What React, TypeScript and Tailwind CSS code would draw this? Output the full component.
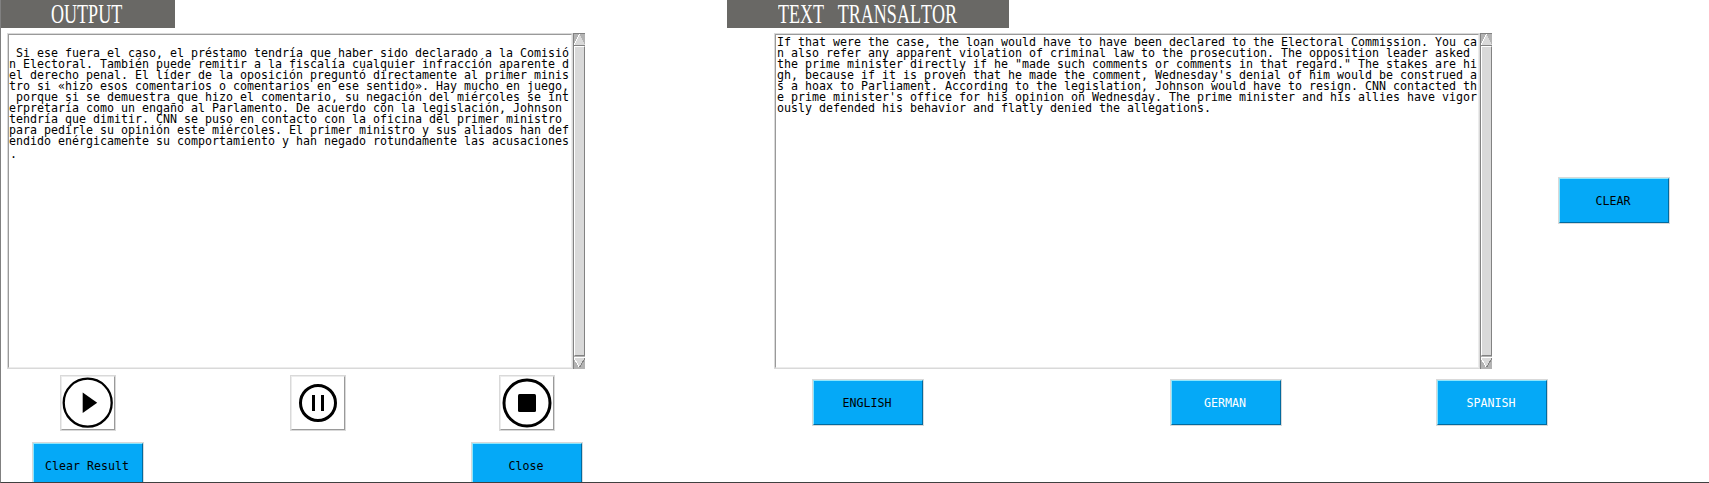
import React from 'react';

const MONO = "font-['DejaVu_Sans_Mono',monospace]";

const OUTPUT_LINES = [
  ' Si ese fuera el caso, el préstamo tendría que haber sido declarado a la Comisió',
  'n Electoral. También puede remitir a la fiscalía cualquier infracción aparente d',
  'el derecho penal. El líder de la oposición preguntó directamente al primer minis',
  'tro si «hizo esos comentarios o comentarios en ese sentido». Hay mucho en juego,',
  ' porque si se demuestra que hizo el comentario, su negación del miércoles se int',
  'erpretaría como un engaño al Parlamento. De acuerdo con la legislación, Johnson ',
  'tendría que dimitir. CNN se puso en contacto con la oficina del primer ministro ',
  'para pedirle su opinión este miércoles. El primer ministro y sus aliados han def',
  'endido enérgicamente su comportamiento y han negado rotundamente las acusaciones',
];

const SOURCE_LINES = [
  'If that were the case, the loan would have to have been declared to the Electoral Commission. You ca',
  'n also refer any apparent violation of criminal law to the prosecution. The opposition leader asked ',
  'the prime minister directly if he "made such comments or comments in that regard." The stakes are hi',
  'gh, because if it is proven that he made the comment, Wednesday\'s denial of him would be construed a',
  's a hoax to Parliament. According to the legislation, Johnson would have to resign. CNN contacted th',
  'e prime minister\'s office for his opinion on Wednesday. The prime minister and his allies have vigor',
  'ously defended his behavior and flatly denied the allegations.',
];

function Heading({ children, className }: { children: string; className: string }) {
  return (
    <h1 className={`h-7 bg-[#696865] text-white ${className}`}>
      <span className="block w-max origin-left scale-x-[0.645] whitespace-nowrap font-['Liberation_Serif',serif] text-[28px] leading-[28px] [font-kerning:none] [word-spacing:14px]">
        {children}
      </span>
    </h1>
  );
}

function Scrollbar() {
  return (
    <div className="flex h-[336px] w-3 flex-col border-l border-t border-[#828282] bg-[#b3b3b3]">
      <svg className="block h-3 w-[11px]" viewBox="0 0 11 12" shapeRendering="crispEdges">
        <path d="M5.5 0 L11 11 H0 Z" fill="#d9d9d9" />
        <path d="M0 11 L5.5 0" stroke="#fff" />
        <path d="M0 11.5 H11" stroke="#828282" />
      </svg>
      <div className="h-[310px] border-b border-l border-r border-t border-b-[#828282] border-l-white border-r-[#828282] border-t-white bg-[#d9d9d9]" />
      <svg className="block h-3 w-[11px]" viewBox="0 0 11 12" shapeRendering="crispEdges">
        <path d="M0 1.5 H11" stroke="#fff" />
        <path d="M0 2 H11 L5.5 11.5 Z" fill="#d9d9d9" />
        <path d="M0 2 L5.5 11.5" stroke="#fff" />
        <path d="M11 2 L5.5 11.5" stroke="#828282" />
      </svg>
    </div>
  );
}

function TextPane({ lines, className, innerClassName, children }: { lines: string[]; className: string; innerClassName: string; children?: React.ReactNode }) {
  return (
    <div className="flex">
      <div className={`h-[336px] border border-[#d9d9d9] ${className}`}>
        <div className={`h-full border border-b-[#ececec] border-l-[#9a9a9a] border-r-[#ececec] border-t-[#9a9a9a] ${innerClassName}`}>
          <div className={`whitespace-pre text-[11.63px] leading-[11px] text-black ${MONO}`}>
            {lines.map((line) => (
              <div key={line}>{line}</div>
            ))}
            {children}
          </div>
        </div>
      </div>
      <Scrollbar />
    </div>
  );
}

function PushButton({ label, className = '' }: { label: string; className?: string }) {
  return (
    <button className={`block h-[47px] w-28 shrink-0 border border-[#d9d9d9] ${className}`}>
      <span className={`flex h-full items-center justify-center whitespace-pre border border-b-[#026a9e] border-l-[#8ee6fc] border-r-[#026a9e] border-t-[#8ee6fc] bg-[#05a9f7] pr-[2px] pt-[2px] text-[11.63px] ${MONO}`}>
        {label}
      </span>
    </button>
  );
}

function IconButton({ label, className = '', children }: { label: string; className?: string; children: React.ReactNode }) {
  return (
    <button aria-label={label} className={`block h-14 w-14 shrink-0 border border-[#d9d9d9] ${className}`}>
      <span className="block h-full border border-b-[#9a9a9a] border-l-[#ececec] border-r-[#9a9a9a] border-t-[#ececec]">
        <svg viewBox="0 0 52 52" className="block h-[52px] w-[52px]">
          {children}
        </svg>
      </span>
    </button>
  );
}

export default function App() {
  return (
    <main className="flex h-[483px] w-[1709px] overflow-hidden border-b border-l border-b-[#404040] border-l-[#808080] bg-white">
      <section className="w-[726px] shrink-0">
        <Heading className="w-[174px] pl-[50px]">OUTPUT</Heading>
        <div className="ml-[6px] mt-[5px]">
          <TextPane lines={OUTPUT_LINES} className="w-[566px]" innerClassName="pt-[13px]">
            <div className="pl-px pt-[2px]">.</div>
          </TextPane>
        </div>
        <div className="ml-[59px] mt-[6px] flex">
          <IconButton label="Play">
            <circle cx="25.7" cy="25.7" r="24" fill="none" stroke="#000" strokeWidth="2.3" />
            <path d="M20.7 15.5 L35.2 25.7 L20.7 36 Z" />
          </IconButton>
          <IconButton label="Pause" className="ml-[174px]">
            <circle cx="26" cy="26" r="17.5" fill="none" stroke="#000" strokeWidth="3" />
            <path d="M20 18h3v16h-3z M29 18h3v16h-3z" />
          </IconButton>
          <IconButton label="Stop" className="ml-[153px]">
            <circle cx="26" cy="26" r="23" fill="none" stroke="#000" strokeWidth="3" />
            <rect x="17" y="17" width="18" height="18" rx="1.5" />
          </IconButton>
        </div>
        <div className="ml-[31px] mt-[11px] flex">
          <PushButton label="Clear Result" />
          <PushButton label="Close" className="ml-[327px]" />
        </div>
      </section>
      <section className="w-[831px] shrink-0">
        <Heading className="w-[282px] pl-[50.5px]">TEXT TRANSALTOR</Heading>
        <div className="ml-[47px] mt-[5px]">
          <TextPane lines={SOURCE_LINES} className="w-[706px]" innerClassName="pt-[2px] pl-px" />
        </div>
        <div className="ml-[85px] mt-[10px] flex">
          <PushButton label="ENGLISH" />
          <PushButton label="GERMAN" className="ml-[246px] text-white" />
          <PushButton label="SPANISH" className="ml-[154px] text-white" />
        </div>
      </section>
      <aside className="pt-[177px]">
        <PushButton label="CLEAR" />
      </aside>
    </main>
  );
}
